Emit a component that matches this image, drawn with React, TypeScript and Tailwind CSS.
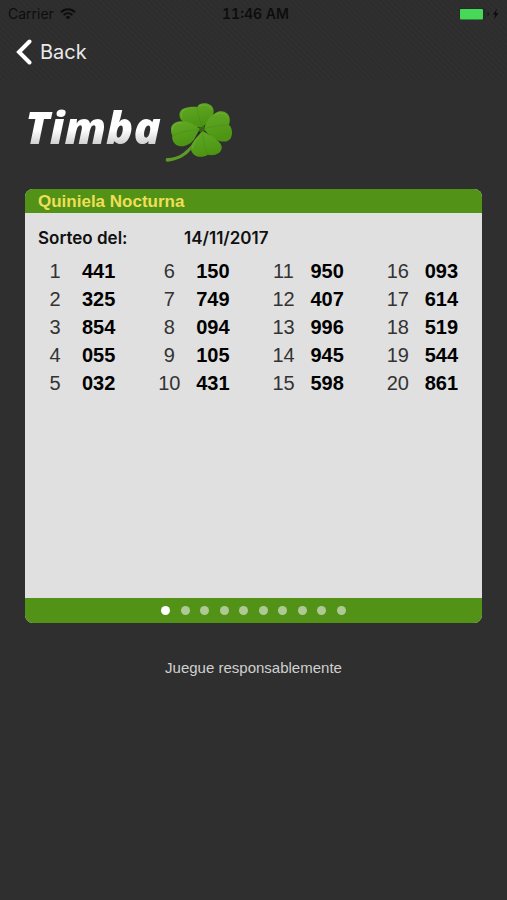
import React, { useState } from 'react';

const draw = {
  title: 'Quiniela Nocturna',
  date: '14/11/2017',
  numbers: [
    '441', '325', '854', '055', '032',
    '150', '749', '094', '105', '431',
    '950', '407', '996', '945', '598',
    '093', '614', '519', '544', '861',
  ],
};

const ROWS = 5;
const COLUMNS = 4;
const PAGES = 10;

const WifiIcon = () => (
  <svg className="h-3 w-4" viewBox="0 0 16 12" fill="none" stroke="currentColor" strokeWidth="2" aria-hidden="true">
    <path d="M1 4.2C5 .3 11 .3 15 4.2" />
    <path d="M3.6 7c2.6-2.5 6.2-2.5 8.8 0" />
    <path d="M8 11.4 5.7 9c1.3-1.2 3.3-1.2 4.6 0z" fill="currentColor" stroke="none" />
  </svg>
);

const BatteryIcon = () => (
  <svg className="h-3 w-10" viewBox="0 0 40 12" aria-hidden="true">
    <rect x="0" y="0" width="27" height="12" rx="2.5" fill="#272a27" />
    <rect x="1" y="1" width="23" height="10.5" rx="1" fill="#45d957" />
    <path d="M28.5 4c2 .6 2 3.6 0 4.2z" fill="#161616" />
    <path d="M38 .8 33.8 6.8h2.5L35 11.4l4.6-6.4h-2.7z" fill="#0d0d0d" />
  </svg>
);

const Clover = () => (
  <svg className="h-[61px] w-[68px]" viewBox="15 22 204 183" aria-hidden="true">
    <defs>
      <linearGradient id="leaf" x1="0" y1="0" x2="0.3" y2="1">
        <stop offset="0" stopColor="#62a926" />
        <stop offset="1" stopColor="#4c9513" />
      </linearGradient>
    </defs>
    <path d="M126 108C112 134 92 156 70 174C54 186 34 191 20 190C15 194 17 202 23 201C48 198 72 188 87 172C107 151 120 130 129 110Z" fill="#5a9a25" />
    <circle cx="126" cy="103" r="10" fill="#35680f" />
    <g fill="url(#leaf)">
      <path d="M122 97C102 99 74 88 63 75C54 62 58 44 75 40C88 36 102 36 112 37C114 29 124 25 136 26C152 27 163 39 161 53C158 70 144 86 126 97Z" />
      <path d="M134 100C137 79 157 56 178 50C194 47 207 56 209 71C210 79 209 85 207 90C216 98 219 115 213 129C207 141 192 143 178 139C158 132 144 120 134 106Z" />
      <path d="M119 103C103 88 82 79 62 80C45 80 32 91 33 105C33 113 35 118 37 123C35 136 42 150 57 154C74 158 93 148 103 133Z" />
      <path d="M128 110C149 120 180 137 185 155C187 169 176 180 160 181C153 182 148 181 143 180C134 188 114 189 103 181C90 171 90 155 99 143C106 131 118 120 128 110Z" />
    </g>
    <g fill="none" stroke="#3f850f" strokeWidth="2" opacity="0.5">
      <path d="M125 96C120 77 114 59 112 38" />
      <path d="M133 102C156 95 180 91 206 91" />
      <path d="M117 105C92 106 66 111 38 123" />
      <path d="M128 112C129 135 134 157 142 179" />
    </g>
    <g fill="none" stroke="#87c64b" strokeWidth="3" opacity="0.4" strokeLinecap="round">
      <path d="M66 68C61 56 68 45 80 43" />
      <path d="M117 34C132 26 150 33 154 45" />
      <path d="M166 60C181 50 200 57 203 70" />
      <path d="M38 106C36 91 50 84 65 84" />
      <path d="M97 160C97 149 107 139 114 129" />
    </g>
  </svg>
);

const StatusBar = () => (
  <div className="grid h-7 grid-cols-3 items-center px-2 text-sm text-[#0d0d0d]">
    <div className="flex items-center gap-1.5">
      <span>Carrier</span>
      <WifiIcon />
    </div>
    <span className="pl-1 text-center font-semibold tabular-nums">11:46 AM</span>
    <div className="flex justify-end">
      <BatteryIcon />
    </div>
  </div>
);

const NavBar = () => (
  <nav className="flex h-12 items-center px-4">
    <button type="button" className="flex items-center gap-2 text-xl text-[#e9e9e9]">
      <svg className="h-[26px] w-4" viewBox="0 0 16 26" fill="none" stroke="#fff" strokeWidth="4" strokeLinecap="round" strokeLinejoin="miter" aria-hidden="true">
        <path d="M13.5 2.5 3 13l10.5 10.5" />
      </svg>
      Back
    </button>
  </nav>
);

const NumbersTable = () => (
  <table className="w-full table-fixed text-xl text-black">
    <tbody>
      {Array.from({ length: ROWS }).map((_, row) => (
        <tr key={row} className="h-7">
          {Array.from({ length: COLUMNS }).map((_, col) => {
            const index = col * ROWS + row;
            return (
              <React.Fragment key={index}>
                <th scope="row" className="w-14 pl-1 text-center font-normal text-[#333]">{index + 1}</th>
                <td className="pl-px font-bold">{draw.numbers[index]}</td>
              </React.Fragment>
            );
          })}
        </tr>
      ))}
    </tbody>
  </table>
);

export default function App() {
  const [page, setPage] = useState(0);

  return (
    <div className="min-h-screen bg-[#2f2f2f] font-['Liberation_Sans',Arial,sans-serif]">
      {/* Top bars */}
      <header className="bg-[repeating-linear-gradient(45deg,#2d2d2d_0px,#2d2d2d_2px,#2f2f2f_2px,#2f2f2f_4px)] pb-1 font-['Inter',sans-serif]">
        <StatusBar />
        <NavBar />
      </header>

      <main className="px-[25px] pt-[22px]">
        {/* Logo */}
        <h1 className="flex items-start">
          <span className="bg-linear-to-b from-white from-55% to-[#cfcfcf] to-85% bg-clip-text pr-1 font-['Open_Sans',sans-serif] text-[45px] leading-[50px] font-extrabold text-transparent italic">
            Timba
          </span>
          <Clover />
        </h1>

        {/* Results card */}
        <section className="mt-[26px] overflow-hidden rounded-lg bg-[#e0e0e0]">
          <h2 className="h-6 bg-[#529216] px-[13px] text-[17px] leading-[26px] font-bold text-[#eedf58]">{draw.title}</h2>
          <div className="min-h-[385px] pt-3">
            <dl className="mb-1 flex h-7 items-center px-[13px] font-['Inter',sans-serif] text-[17px] font-semibold text-[#111]">
              <dt className="w-[146px]">Sorteo del:</dt>
              <dd>{draw.date}</dd>
            </dl>
            <NumbersTable />
          </div>
          <div className="flex h-[25px] items-center justify-center bg-[#529216]">
            <div className="flex w-[185px] justify-between">
              {Array.from({ length: PAGES }).map((_, i) => (
                <button
                  key={i}
                  type="button"
                  aria-label={`${i + 1}`}
                  onClick={() => setPage(i)}
                  className={i === page ? 'size-[9px] rounded-full bg-white' : 'size-[9px] rounded-full bg-[#afc995]'}
                />
              ))}
            </div>
          </div>
        </section>

        <p className="mt-[35px] text-center text-[15px] leading-5 text-[#cfcfcf]">Juegue responsablemente</p>
      </main>
    </div>
  );
}
